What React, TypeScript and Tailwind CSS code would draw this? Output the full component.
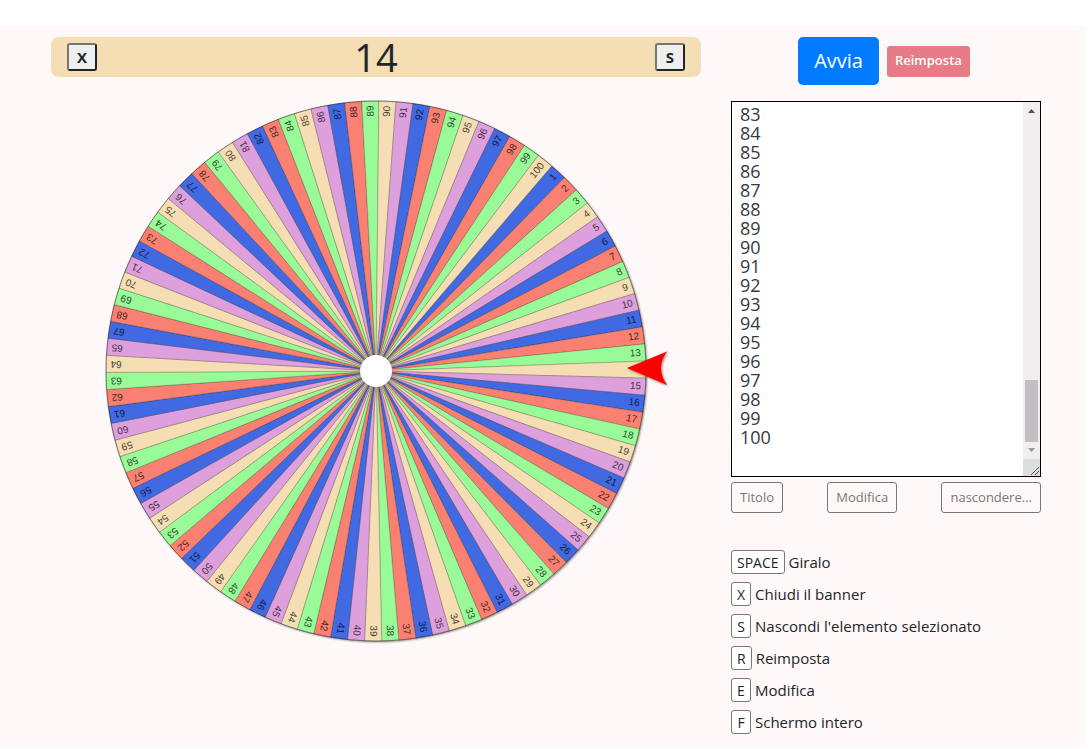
import { useEffect, useRef } from "react";

const colors = ["#4169e1", "#fa8072", "#98fb98", "#f5deb3", "#dda0dd"];
const items = Array.from({ length: 100 }, (_, i) => i + 1).filter((n) => n !== 66);
const selected = 14;

const shortcuts = [
  { key: "SPACE", label: "Giralo" },
  { key: "X", label: "Chiudi il banner" },
  { key: "S", label: "Nascondi l'elemento selezionato" },
  { key: "R", label: "Reimposta" },
  { key: "E", label: "Modifica" },
  { key: "F", label: "Schermo intero" },
];

const radius = 270;
const step = 360 / items.length;

function slicePath() {
  const half = (step / 2) * (Math.PI / 180);
  const x = radius * Math.cos(half);
  const y = radius * Math.sin(half);
  return `M0 0 L${x} ${-y} A${radius} ${radius} 0 0 1 ${x} ${y} Z`;
}

function Wheel() {
  const path = slicePath();
  const start = items.indexOf(selected);

  return (
    <svg viewBox="0 0 650 560" className="mt-4 h-auto w-full overflow-visible" role="img" aria-label="Ruota">
      <defs>
        <filter id="wheel-shadow" x="-10%" y="-10%" width="120%" height="120%">
          <feDropShadow dx="1" dy="1" stdDeviation="1.2" floodOpacity="0.5" />
        </filter>
      </defs>
      <g transform="translate(325 278)">
        <circle r={radius} fill="#f5deb3" filter="url(#wheel-shadow)" />
        {items.map((n, i) => (
          <g key={n} transform={`rotate(${(i - start) * step - 0.3})`}>
            <path d={path} fill={colors[i % colors.length]} stroke="#000" strokeOpacity="0.5" strokeWidth="0.4" />
            {n !== selected && (
              <text
                x="265.5"
                y="3"
                textAnchor="end"
                fontFamily="Liberation Sans, Arial, sans-serif"
                fontSize="10"
                fill="#000"
                fillOpacity="0.75"
              >
                {n}
              </text>
            )}
          </g>
        ))}
        <circle r={radius} fill="none" stroke="#000" strokeOpacity="0.45" strokeWidth="0.8" />
        <circle r="16" fill="#fff" />
        <path d="M251 -3 L291 -19.5 Q279 -3 291 14 Z" fill="#f00" filter="url(#wheel-shadow)" />
      </g>
    </svg>
  );
}

function Scrollbar() {
  return (
    <div className="flex w-[17px] flex-col bg-[#f0eeee]" aria-hidden="true">
      <svg viewBox="0 0 17 17" className="size-[17px]">
        <path d="M5 11 L8.5 7 L12 11 Z" fill="#505050" />
      </svg>
      <div className="flex flex-1 flex-col justify-end px-0.5">
        <div className="h-[62px] bg-[#c1bfc1]" />
      </div>
      <svg viewBox="0 0 17 17" className="size-[17px]">
        <path d="M5 6 L8.5 10 L12 6 Z" fill="#999" />
      </svg>
      <svg viewBox="0 0 17 17" className="size-[17px] bg-[#dcdedc]">
        <path d="M8 16 L16 8 M12 16 L16 12" stroke="#555" strokeWidth="1" />
      </svg>
    </div>
  );
}

function ItemList() {
  const ref = useRef<HTMLTextAreaElement>(null);

  useEffect(() => {
    if (ref.current) {
      ref.current.scrollTop = ref.current.scrollHeight;
    }
  }, []);

  return (
    <div className="mt-4 flex h-[376px] border border-black bg-white">
      <div className="flex min-w-0 flex-1 pt-0.5 pb-1">
        <textarea
          ref={ref}
          aria-label="Elementi"
          defaultValue={items.join("\n") + "\n"}
          className="min-w-0 flex-1 resize-none px-2 pb-1.5 text-[18px] leading-[19px] text-[#343a40] outline-none [scrollbar-width:none]"
        />
      </div>
      <Scrollbar />
    </div>
  );
}

export default function App() {
  return (
    <div className="flex min-h-screen bg-white pt-[26px] pr-[5px] pb-0.5 font-['Open_Sans',sans-serif] text-[#212529]">
      <main className="flex flex-1 items-start gap-[30px] bg-[#fff8f8] pt-[11px] pr-[44px] pb-3 pl-[51px]">
        <section className="min-w-0 flex-1">
          <div className="flex h-10 items-center justify-between rounded-lg bg-[#f5deb3] px-4">
            <button
              type="button"
              className="h-7 w-[30px] rounded-[3px] border-2 border-t-[#767676] border-r-[#212529] border-b-[#212529] border-l-[#767676] bg-[#efefef] text-[15px] leading-6 font-bold"
            >
              X
            </button>
            <h1 className="text-[38px] leading-[42px]">{selected}</h1>
            <button
              type="button"
              className="h-7 w-[30px] rounded-[3px] border-2 border-t-[#767676] border-r-[#212529] border-b-[#212529] border-l-[#767676] bg-[#efefef] text-[15px] leading-6 font-bold"
            >
              S
            </button>
          </div>
          <Wheel />
        </section>

        <aside className="w-[310px]">
          <div className="flex items-center justify-center gap-2 pr-1">
            <button type="button" className="h-12 rounded-[5px] bg-[#007bff] px-4 text-[20px] text-white">
              Avvia
            </button>
            <button type="button" className="h-[31px] rounded-[3px] bg-[#e87c86] px-2 text-[13px] font-semibold text-white">
              Reimposta
            </button>
          </div>
          <ItemList />
          <div className="mt-[5px] flex justify-between text-[13px] text-[#777]">
            <button type="button" className="h-[31px] rounded-[3px] border border-[#777] px-2">
              Titolo
            </button>
            <button type="button" className="h-[31px] rounded-[3px] border border-[#777] px-2">
              Modifica
            </button>
            <button type="button" className="h-[31px] rounded-[3px] border border-[#777] px-2">
              nascondere...
            </button>
          </div>
          <ul className="mt-[37px] space-y-2">
            {shortcuts.map((s) => (
              <li key={s.key} className="flex h-6 items-center gap-1 text-[15px]">
                <kbd className="flex h-6 min-w-5 items-center justify-center rounded-[3px] border border-[#777] bg-white px-[5px] font-['Open_Sans',sans-serif] text-[14px]">
                  {s.key}
                </kbd>
                <span>{s.label}</span>
              </li>
            ))}
          </ul>
        </aside>
      </main>
    </div>
  );
}
